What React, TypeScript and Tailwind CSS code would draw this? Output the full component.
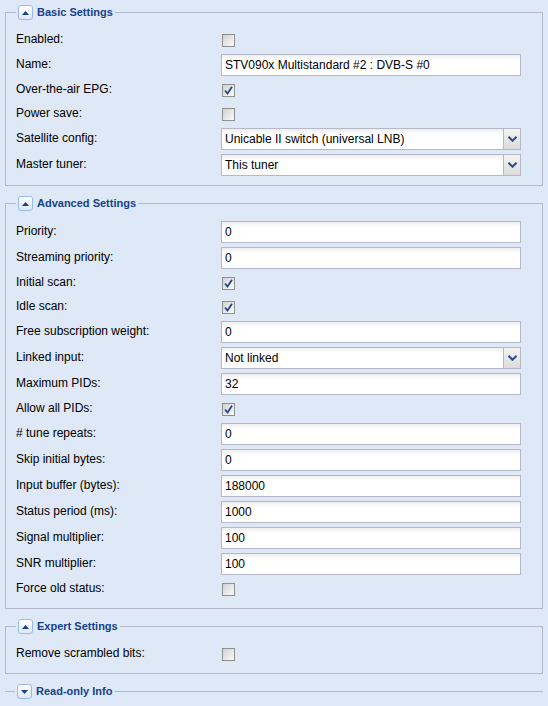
import React from 'react'

type Row =
  | { kind: 'check'; label: string; checked: boolean }
  | { kind: 'text'; label: string; value: string }
  | { kind: 'combo'; label: string; value: string }

type Section = {
  title: string
  open: boolean
  rows: Row[]
}

const sections: Section[] = [
  {
    title: 'Basic Settings',
    open: true,
    rows: [
      { kind: 'check', label: 'Enabled:', checked: false },
      { kind: 'text', label: 'Name:', value: 'STV090x Multistandard #2 : DVB-S #0' },
      { kind: 'check', label: 'Over-the-air EPG:', checked: true },
      { kind: 'check', label: 'Power save:', checked: false },
      { kind: 'combo', label: 'Satellite config:', value: 'Unicable II switch (universal LNB)' },
      { kind: 'combo', label: 'Master tuner:', value: 'This tuner' },
    ],
  },
  {
    title: 'Advanced Settings',
    open: true,
    rows: [
      { kind: 'text', label: 'Priority:', value: '0' },
      { kind: 'text', label: 'Streaming priority:', value: '0' },
      { kind: 'check', label: 'Initial scan:', checked: true },
      { kind: 'check', label: 'Idle scan:', checked: true },
      { kind: 'text', label: 'Free subscription weight:', value: '0' },
      { kind: 'combo', label: 'Linked input:', value: 'Not linked' },
      { kind: 'text', label: 'Maximum PIDs:', value: '32' },
      { kind: 'check', label: 'Allow all PIDs:', checked: true },
      { kind: 'text', label: '# tune repeats:', value: '0' },
      { kind: 'text', label: 'Skip initial bytes:', value: '0' },
      { kind: 'text', label: 'Input buffer (bytes):', value: '188000' },
      { kind: 'text', label: 'Status period (ms):', value: '1000' },
      { kind: 'text', label: 'Signal multiplier:', value: '100' },
      { kind: 'text', label: 'SNR multiplier:', value: '100' },
      { kind: 'check', label: 'Force old status:', checked: false },
    ],
  },
  {
    title: 'Expert Settings',
    open: true,
    rows: [{ kind: 'check', label: 'Remove scrambled bits:', checked: false }],
  },
  { title: 'Read-only Info', open: false, rows: [] },
]

const Toggle = ({ open }: { open: boolean }) => (
  <span className="w-[15px] h-[15px] flex items-center justify-center rounded-[3px] border border-[#99bbe8] bg-gradient-to-b from-white to-[#dde8f8]">
    <svg width="7" height="4" viewBox="0 0 7 4">
      {open ? <path d="M0 4 L3.5 0 L7 4 Z" fill="#15428b" /> : <path d="M0 0 L7 0 L3.5 4 Z" fill="#15428b" />}
    </svg>
  </span>
)

const Checkbox = ({ checked }: { checked: boolean }) => (
  <span className="ml-px w-[13px] h-[13px] flex items-center justify-center border border-[#8e8f8f] bg-gradient-to-br from-[#d2d2d2] to-[#fbfbfb]">
    {checked && (
      <svg width="9" height="9" viewBox="0 0 9 9">
        <path d="M1 4.5 L3.5 7.5 L8 0.8" stroke="#24478f" strokeWidth="1.8" fill="none" />
      </svg>
    )}
  </span>
)

const TextInput = ({ value }: { value: string }) => (
  <div className="w-[300px] h-[22px] flex items-center px-[3px] border border-[#b5b8c8] bg-gradient-to-b from-[#eeeeee] from-0% via-white via-[25%] to-white text-[12px] text-black">
    {value}
  </div>
)

const Combo = ({ value }: { value: string }) => (
  <div className="w-[300px] h-[22px] flex border border-[#b5b8c8] bg-white">
    <div className="flex-1 flex items-center px-[3px] bg-gradient-to-b from-[#eeeeee] from-0% via-white via-[25%] to-white text-[12px] text-black">
      {value}
    </div>
    <div className="w-[17px] flex items-center justify-center border-l border-[#b5b8c8] bg-gradient-to-b from-[#f4f4f4] to-[#dcdcdc]">
      <svg width="9" height="6" viewBox="0 0 9 6">
        <path d="M0.5 0.8 L4.5 4.8 L8.5 0.8" stroke="#2d4d8c" strokeWidth="2" fill="none" />
      </svg>
    </div>
  </div>
)

const FieldRow = ({ row }: { row: Row }) => (
  <div className={`flex items-center mb-1 ${row.kind === 'check' ? 'h-5' : 'h-[22px]'}`}>
    <label className="w-[205px] shrink-0 text-[12px] text-black pb-[2px]">{row.label}</label>
    {row.kind === 'check' && <Checkbox checked={row.checked} />}
    {row.kind === 'text' && <TextInput value={row.value} />}
    {row.kind === 'combo' && <Combo value={row.value} />}
  </div>
)

export default function App() {
  return (
    <div className="w-[548px] h-[706px] overflow-hidden bg-[#dfe8f6] pt-[5px] font-['Liberation_Sans',Arial,sans-serif]">
      {sections.map((s) => (
        <fieldset
          key={s.title}
          className={`mx-[5px] mb-[10px] border border-[#b5b8c8] px-[10px] ${s.open ? 'pt-[10px] pb-[5px]' : 'pt-[10px] pb-[10px] border-b-0 border-x-0'}`}
        >
          <legend className="px-[2px]">
            <span className="flex items-center gap-[4px]">
              <Toggle open={s.open} />
              <span className="text-[11px] font-bold text-[#15428b] leading-[15px]">{s.title}</span>
            </span>
          </legend>
          {s.open && s.rows.map((r) => <FieldRow key={r.label} row={r} />)}
        </fieldset>
      ))}
    </div>
  )
}
